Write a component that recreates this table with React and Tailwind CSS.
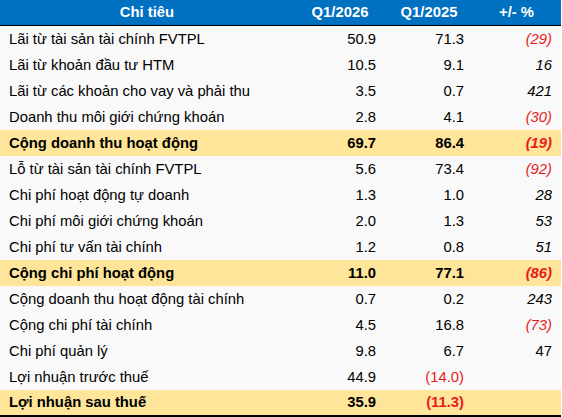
import React from "react";

const rows = [
  { label: "Lãi từ tài sản tài chính FVTPL", a: "50.9", b: "71.3", c: "(29)" },
  { label: "Lãi từ khoản đầu tư HTM", a: "10.5", b: "9.1", c: "16" },
  { label: "Lãi từ các khoản cho vay và phải thu", a: "3.5", b: "0.7", c: "421" },
  { label: "Doanh thu môi giới chứng khoán", a: "2.8", b: "4.1", c: "(30)" },
  { label: "Cộng doanh thu hoạt động", a: "69.7", b: "86.4", c: "(19)", bold: true },
  { label: "Lỗ từ tài sản tài chính FVTPL", a: "5.6", b: "73.4", c: "(92)" },
  { label: "Chi phí hoạt động tự doanh", a: "1.3", b: "1.0", c: "28" },
  { label: "Chi phí môi giới chứng khoán", a: "2.0", b: "1.3", c: "53" },
  { label: "Chi phí tư vấn tài chính", a: "1.2", b: "0.8", c: "51" },
  { label: "Cộng chi phí hoạt động", a: "11.0", b: "77.1", c: "(86)", bold: true },
  { label: "Cộng doanh thu hoạt động tài chính", a: "0.7", b: "0.2", c: "243" },
  { label: "Cộng chi phí tài chính", a: "4.5", b: "16.8", c: "(73)" },
  { label: "Chi phí quản lý", a: "9.8", b: "6.7", c: "47", upright: true },
  { label: "Lợi nhuận trước thuế", a: "44.9", b: "(14.0)", c: "" },
  { label: "Lợi nhuận sau thuế", a: "35.9", b: "(11.3)", c: "", bold: true, last: true },
];

const neg = (v) => v.startsWith("(");

export default function App() {
  return (
    <div
      className="w-[562px] h-[417px] bg-white text-[14.8px] text-black"
      style={{ fontFamily: '"Liberation Sans", Arial, sans-serif' }}
    >
      <div className="w-[561px]">
        <div className="grid grid-cols-[294px_92px_86px_89px] h-[26px] bg-[#0070C0] border-b border-black text-white font-bold items-center">
          <div className="text-center">Chỉ tiêu</div>
          <div className="text-center">Q1/2026</div>
          <div className="text-center">Q1/2025</div>
          <div className="text-center">+/- %</div>
        </div>
        {rows.map((r, i) => (
          <div
            key={i}
            className={
              "grid grid-cols-[294px_92px_86px_89px] items-center " +
              (r.last ? "h-[27px] border-b-2 border-black " : "h-[26px] ") +
              (r.bold ? "bg-[#FEE599] font-bold" : "bg-[#F9F9F9]")
            }
          >
            <div className="pl-[9px] whitespace-nowrap">{r.label}</div>
            <div className={"text-right pr-[10px] " + (neg(r.a) ? "text-[#E81C1C]" : "")}>{r.a}</div>
            <div className={"text-right pr-[8px] " + (neg(r.b) ? "text-[#E81C1C]" : "")}>{r.b}</div>
            <div className={"text-right pr-[9px] " + (r.upright ? "" : "italic ") + (neg(r.c) ? "text-[#E81C1C]" : "")}>{r.c}</div>
          </div>
        ))}
      </div>
    </div>
  );
}
